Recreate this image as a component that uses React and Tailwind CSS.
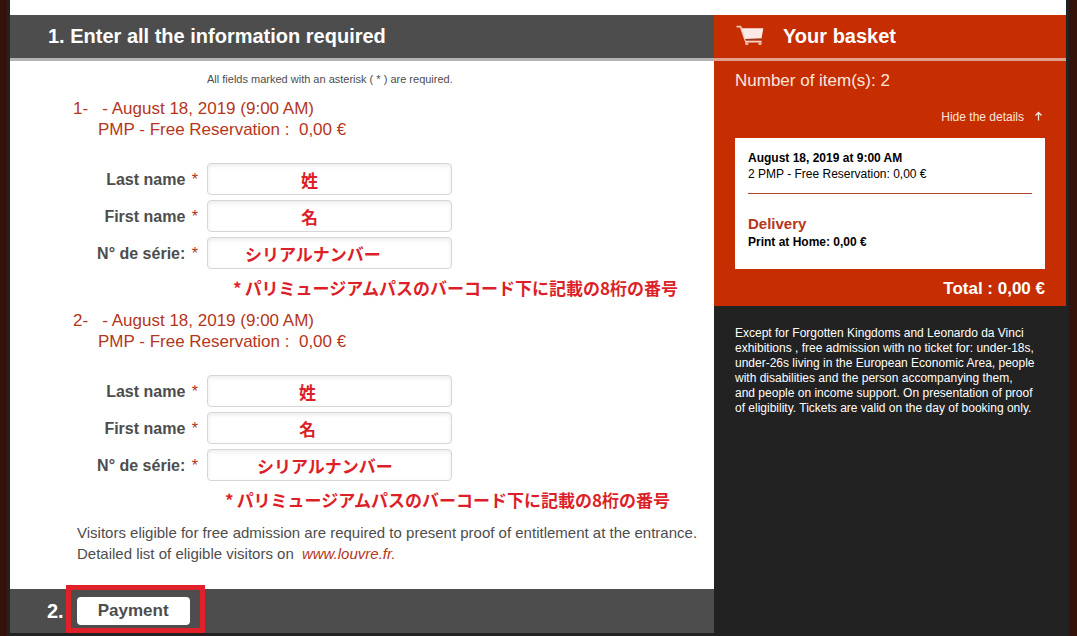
import React from "react";

const visitors = [
  {
    id: 1,
    fields: [
      { name: "lastName", label: "Last name", value: "姓", pad: "pl-[93px]" },
      { name: "firstName", label: "First name", value: "名", pad: "pl-[93px]" },
      { name: "serial", label: "N° de série:", value: "シリアルナンバー", pad: "pl-[37px]" },
    ],
    hintPad: "pl-[223px]",
  },
  {
    id: 2,
    fields: [
      { name: "lastName", label: "Last name", value: "姓", pad: "pl-[91px]" },
      { name: "firstName", label: "First name", value: "名", pad: "pl-[91px]" },
      { name: "serial", label: "N° de série:", value: "シリアルナンバー", pad: "pl-[49px]" },
    ],
    hintPad: "pl-[215px]",
  },
];

function CartIcon() {
  return (
    <svg width="28" height="21" viewBox="0 0 28 21" aria-hidden="true">
      <path d="M0.5 1.7H4.6L9.4 15.6" fill="none" stroke="#f3c3b3" strokeWidth="1.8" strokeLinejoin="round" />
      <path d="M5.4 3.2H27.3L25.6 13.2L9 14Z" fill="#fbeae5" />
      <path d="M9.4 14.6H25.4" stroke="#8f3a22" strokeWidth="1.2" />
      <path d="M9 16.6H25.6" stroke="#f6d5ca" strokeWidth="1.8" />
      <circle cx="10.8" cy="18.6" r="1.7" fill="#eeb5a3" />
      <circle cx="24" cy="18.6" r="1.7" fill="#eeb5a3" />
    </svg>
  );
}

function Field({ id, field }) {
  return (
    <div className="flex items-center">
      <label htmlFor={id} className="w-[197px] pt-0.5 pr-[9px] text-right text-base font-bold text-[#4d4d4d] whitespace-nowrap">
        {field.label} <span className="ml-0.5 font-normal text-[#b5301a]">*</span>
      </label>
      <input
        id={id}
        type="text"
        defaultValue={field.value}
        className={`h-8 w-[245px] rounded border border-[#d6d6d6] bg-white text-[17px] font-bold text-[#dc1f28] font-['Noto_Sans_CJK_JP',sans-serif] shadow-[inset_0_2px_4px_rgba(0,0,0,0.08)] outline-none ${field.pad}`}
      />
    </div>
  );
}

function Visitor({ visitor }) {
  return (
    <section className="mb-[11px]">
      <h2 className="pl-[63px] text-[17px] leading-[21px] text-[#b5361b]">
        <span className="block whitespace-pre">{visitor.id}-   - August 18, 2019 (9:00 AM)</span>
        <span className="block whitespace-pre pl-[25px]">PMP - Free Reservation :  0,00 €</span>
      </h2>
      <div className="mt-[23px] flex flex-col gap-[5px]">
        {visitor.fields.map((field) => (
          <Field key={field.name} id={`${field.name}-${visitor.id}`} field={field} />
        ))}
      </div>
      <p className={`mt-2 text-[17px] leading-[22px] font-bold whitespace-nowrap text-[#dc1f28] font-['Noto_Sans_CJK_JP',sans-serif] ${visitor.hintPad}`}>
        <span className="mr-[3px]">*</span>パリミュージアムパスのバーコード下に記載の8桁の番号
      </p>
    </section>
  );
}

function Basket() {
  return (
    <aside className="bg-[#222222] text-white">
      <div className="bg-[#c62d00] pb-[5px]">
        <div className="flex h-[46px] items-center border-b-[3px] border-[#e0a08c] pb-0.5 pl-[22px]">
          <CartIcon />
          <h2 className="ml-[19px] text-xl font-bold">Your basket</h2>
        </div>
        <div className="px-[21px]">
          <p className="pt-2 text-[17px] leading-6 text-[#fbe6dc]">Number of item(s): 2</p>
          <div className="mt-4 flex justify-end">
            <button type="button" className="flex items-center gap-[9px] text-xs text-[#fbe6dc]">
              Hide the details
              <svg width="12" height="12" viewBox="0 0 12 12" fill="none" stroke="#fbe6dc" strokeWidth="1.3" aria-hidden="true">
                <path d="M5.5 9.5V1.5M2.5 4.5L5.5 1.5L8.5 4.5" />
              </svg>
            </button>
          </div>
          <div className="mt-[13px] bg-white px-[13px] pt-3 pb-[19px] text-xs leading-4 text-black">
            <p className="font-bold">August 18, 2019 at 9:00 AM</p>
            <p>2 PMP - Free Reservation: 0,00 €</p>
            <div className="mt-[11px] h-px bg-[#b5422a]" />
            <h3 className="mt-[21px] text-[15px] leading-[18px] font-bold text-[#b5361b]">Delivery</h3>
            <p className="mt-px font-bold">Print at Home: 0,00 €</p>
          </div>
          <p className="mt-2 text-right text-[17px] leading-6 font-bold">Total : 0,00 €</p>
        </div>
      </div>
      <p className="px-[21px] pt-5 text-xs leading-[15px]">
        Except for Forgotten Kingdoms and Leonardo da Vinci
        <br />
        exhibitions , free admission with no ticket for: under-18s,
        <br />
        under-26s living in the European Economic Area, people
        <br />
        with disabilities and the person accompanying them,
        <br />
        and people on income support. On presentation of proof
        <br />
        of eligibility. Tickets are valid on the day of booking only.
      </p>
    </aside>
  );
}

export default function App() {
  return (
    <div className="min-h-screen bg-[#35130a] pl-[7px] pr-2 font-['Liberation_Sans',Arial,sans-serif]">
      <div className="min-h-screen bg-[#222222] px-[3px]">
        <div className="h-[15px] bg-white" />
        <div className="grid grid-cols-3">
          <form className="col-span-2 bg-white" onSubmit={(e) => e.preventDefault()}>
            <div className="flex h-[46px] items-center border-b-[3px] border-[#b3b3b3] bg-[#4d4d4d] pb-0.5 pl-[38px]">
              <h1 className="text-xl font-bold text-white">1. Enter all the information required</h1>
            </div>
            <p className="mb-[11px] pt-[10px] pl-[197px] text-[11px] leading-4 text-[#4d4d4d]">
              All fields marked with an asterisk ( * ) are required.
            </p>
            {visitors.map((visitor) => (
              <Visitor key={visitor.id} visitor={visitor} />
            ))}
            <p className="mb-[25px] pl-[67px] text-[15px] leading-[21px] text-[#4d4d4d]">
              Visitors eligible for free admission are required to present proof of entitlement at the entrance.
              <br />
              Detailed list of eligible visitors on{" "}
              <a href="#louvre" className="ml-1 text-[#b5361b] italic">www.louvre.fr.</a>
            </p>
            <div className="flex h-11 items-center bg-[#4d4d4d] pl-[37px]">
              <span className="text-xl font-bold text-white">2.</span>
              <div className="relative ml-[13px]">
                <button type="submit" className="block h-7 w-[113px] rounded bg-white text-[17px] font-bold text-[#4d4d4d]">
                  Payment
                </button>
                <div className="pointer-events-none absolute -top-3 -right-[15px] -bottom-2 -left-[11px] border-[5px] border-[#e0212a]" />
              </div>
            </div>
          </form>
          <Basket />
        </div>
      </div>
    </div>
  );
}
